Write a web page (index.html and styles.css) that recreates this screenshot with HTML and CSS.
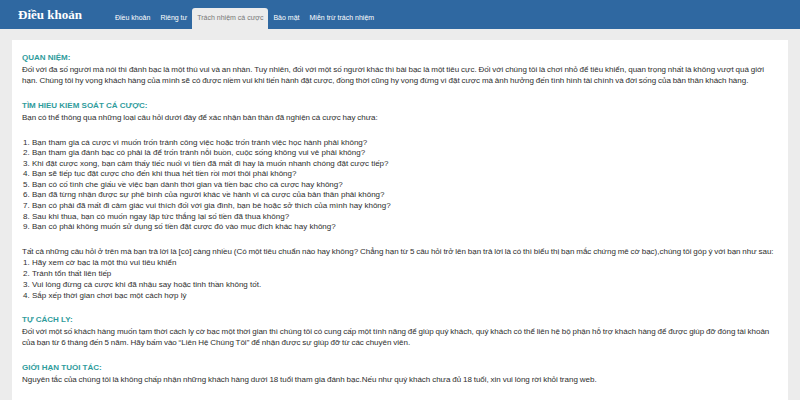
FILE: index.html
```html
<!DOCTYPE html>
<html lang="vi">
<head>
    <meta charset="UTF-8">
    <meta name="viewport" content="width=device-width, initial-scale=1.0">
    <title>Điều khoản - Trách nhiệm cá cược</title>
    <link rel="stylesheet" href="styles.css">
</head>
<body>
    <header>
        <div class="logo">Điều khoản</div>
        <nav>
            <a href="#">Điều khoản</a>
            <a href="#">Riêng tư</a>
            <a href="#" class="active">Trách nhiệm cá cược</a>
            <a href="#">Bảo mật</a>
            <a href="#">Miễn trừ trách nhiệm</a>
        </nav>
    </header>
    <main>
        <div class="panel">
            <section>
                <h3>Quan niệm:</h3>
                <p>Đối với đa số người mà nói thì đánh bạc là một thú vui và an nhàn. Tuy nhiên, đối với một số người khác thì bài bạc là một tiêu cực. Đối với chúng tôi là chơi nhỏ để tiêu khiển, quan trọng nhất là không vượt quá giới hạn. Chúng tôi hy vọng khách hàng của mình sẽ có được niềm vui khi tiến hành đặt cược, đồng thời cũng hy vọng đừng vì đặt cược mà ảnh hưởng đến tình hình tài chính và đời sống của bản thân khách hàng.</p>
            </section>

            <section>
                <h3>Tìm hiểu kiểm soát cá cược:</h3>
                <p>Bạn có thể thông qua những loại câu hỏi dưới đây để xác nhận bản thân đã nghiện cá cược hay chưa:</p>
                <ol class="questions">
                    <li>Bạn tham gia cá cược vì muốn trốn tránh công việc hoặc trốn tránh việc học hành phải không?</li>
                    <li>Bạn tham gia đánh bạc có phải là để trốn tránh nỗi buồn, cuộc sống không vui vẻ phải không?</li>
                    <li>Khi đặt cược xong, bạn cảm thấy tiếc nuối vì tiền đã mất đi hay là muốn nhanh chóng đặt cược tiếp?</li>
                    <li>Bạn sẽ tiếp tục đặt cược cho đến khi thua hết tiền rồi mới thôi phải không?</li>
                    <li>Bạn có cố tình che giấu về việc bạn dành thời gian và tiền bạc cho cá cược hay không?</li>
                    <li>Bạn đã từng nhận được sự phê bình của người khác về hành vi cá cược của bản thân phải không?</li>
                    <li>Bạn có phải đã mất đi cảm giác vui thích đối với gia đình, bạn bè hoặc sở thích của mình hay không?</li>
                    <li>Sau khi thua, bạn có muốn ngay lập tức thắng lại số tiền đã thua không?</li>
                    <li>Bạn có phải không muốn sử dụng số tiền đặt cược đó vào mục đích khác hay không?</li>
                </ol>
                <p>Tất cả những câu hỏi ở trên mà bạn trả lời là [có] càng nhiều (Có một tiêu chuẩn nào hay không? Chẳng hạn từ 5 câu hỏi trở lên bạn trả lời là có thì biểu thị bạn mắc chứng mê cờ bạc),chúng tôi góp ý với bạn như sau:</p>
                <ol>
                    <li>Hãy xem cờ bạc là một thú vui tiêu khiển</li>
                    <li>Tránh tổn thất liên tiếp</li>
                    <li>Vui lòng đừng cá cược khi đã nhậu say hoặc tinh thần không tốt.</li>
                    <li>Sắp xếp thời gian chơi bạc một cách hợp lý</li>
                </ol>
            </section>

            <section>
                <h3>Tự cách ly:</h3>
                <p>Đối với một số khách hàng muốn tạm thời cách ly cờ bạc một thời gian thì chúng tôi có cung cấp một tính năng để giúp quý khách, quý khách có thể liên hệ bộ phận hỗ trợ khách hàng để được giúp đỡ đóng tài khoản của bạn từ 6 tháng đến 5 năm. Hãy bấm vào “Liên Hệ Chúng Tôi” để nhận được sự giúp đỡ từ các chuyên viên.</p>
            </section>

            <section>
                <h3>Giới hạn tuổi tác:</h3>
                <p>Nguyên tắc của chúng tôi là không chấp nhận những khách hàng dưới 18 tuổi tham gia đánh bạc.Nếu như quý khách chưa đủ 18 tuổi, xin vui lòng rời khỏi trang web.</p>
            </section>
        </div>
    </main>
</body>
</html>
```

FILE: styles.css
```css
body {
    font-family: "Liberation Sans", Arial, sans-serif;
    margin: 0;
    padding: 0;
    background-color: #ececec;
    color: #2e2e2e;
}
header {
    display: flex;
    align-items: flex-end;
    height: 29px;
    padding-left: 18px;
    background-color: #2f68a1;
}
header .logo {
    align-self: center;
    font-family: "Liberation Serif", serif;
    font-weight: bold;
    font-size: 13px;
    color: #fff;
    margin-right: 28px;
}
nav {
    display: flex;
    align-items: flex-end;
}
nav a {
    display: block;
    padding: 0 5px;
    height: 21px;
    line-height: 19px;
    font-size: 7px;
    color: #fff;
    text-decoration: none;
}
nav a.active {
    background-color: #ececec;
    color: #777;
    border-radius: 3px 3px 0 0;
}
main {
    padding: 11px 12px 0;
}
.panel {
    background-color: #fff;
    padding: 12px 10px 20px;
    font-size: 8px;
    line-height: 11px;
}
section {
    margin-bottom: 13.5px;
}
h3 {
    margin: 0 0 1px;
    font-size: 8px;
    text-transform: uppercase;
    color: #2f9c9c;
}
p {
    margin: 0;
    word-spacing: -0.4px; /* dòng dài xuống hàng giống bản gốc */
}
ol {
    margin: 0;
    padding-left: 10px;
}
ol.questions {
    margin: 15px 0 13px;
    line-height: 10.6px;
}
```
